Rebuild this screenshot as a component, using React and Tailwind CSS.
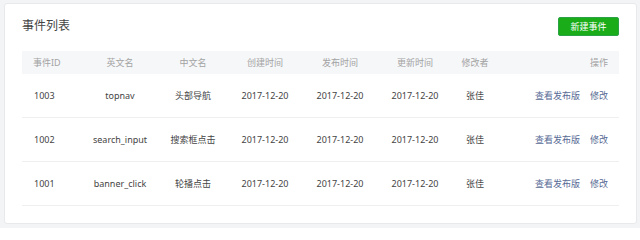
import React from 'react'

const events = [
  { id: '1003', en: 'topnav', cn: '头部导航', created: '2017-12-20', published: '2017-12-20', updated: '2017-12-20', editor: '张佳' },
  { id: '1002', en: 'search_input', cn: '搜索框点击', created: '2017-12-20', published: '2017-12-20', updated: '2017-12-20', editor: '张佳' },
  { id: '1001', en: 'banner_click', cn: '轮播点击', created: '2017-12-20', published: '2017-12-20', updated: '2017-12-20', editor: '张佳' },
]

const cols = 'grid grid-cols-[60px_76px_70px_74px_76px_74px_46px_1fr] items-center'

const App = () => {
  return (
    <div className="w-[640px] h-[228px] bg-[#f3f4f6] pt-[3px] pl-[4px]" style={{ fontFamily: '"Noto Sans", "Noto Sans CJK SC", sans-serif' }}>
      <div className="w-[633px] h-[221px] bg-white rounded-[3px] border border-[#e8e9eb] px-[17px]">
        <div className="flex items-center justify-between h-[47px] pb-[3px]">
          <h2 className="text-[12px] text-[#444]">事件列表</h2>
          <button className="w-[61px] h-[19px] rounded-[2px] bg-[#1aad19] border border-[#2ba245] text-white text-[9px] leading-none">
            新建事件
          </button>
        </div>

        <div className="text-[9px]">
          <div className={`${cols} h-[23px] bg-[#f6f7f9] text-[#a3a3a3]`}>
            <span className="pl-[11px]">事件ID</span>
            <span className="text-center">英文名</span>
            <span className="text-center">中文名</span>
            <span className="text-center">创建时间</span>
            <span className="text-center">发布时间</span>
            <span className="text-center">更新时间</span>
            <span className="text-center">修改者</span>
            <span className="text-right pr-[11px]">操作</span>
          </div>
          {events.map((e) => (
            <div key={e.id} className={`${cols} h-[44px] border-b border-[#eeeff1] text-[#444]`}>
              <span className="pl-[12px]">{e.id}</span>
              <span className="text-center">{e.en}</span>
              <span className="text-center">{e.cn}</span>
              <span className="text-center">{e.created}</span>
              <span className="text-center">{e.published}</span>
              <span className="text-center">{e.updated}</span>
              <span className="text-center">{e.editor}</span>
              <span className="flex justify-end gap-[10px] pr-[11px] text-[#576b95]">
                <a className="cursor-pointer">查看发布版</a>
                <a className="cursor-pointer">修改</a>
              </span>
            </div>
          ))}
        </div>
      </div>
    </div>
  )
}

export default App
